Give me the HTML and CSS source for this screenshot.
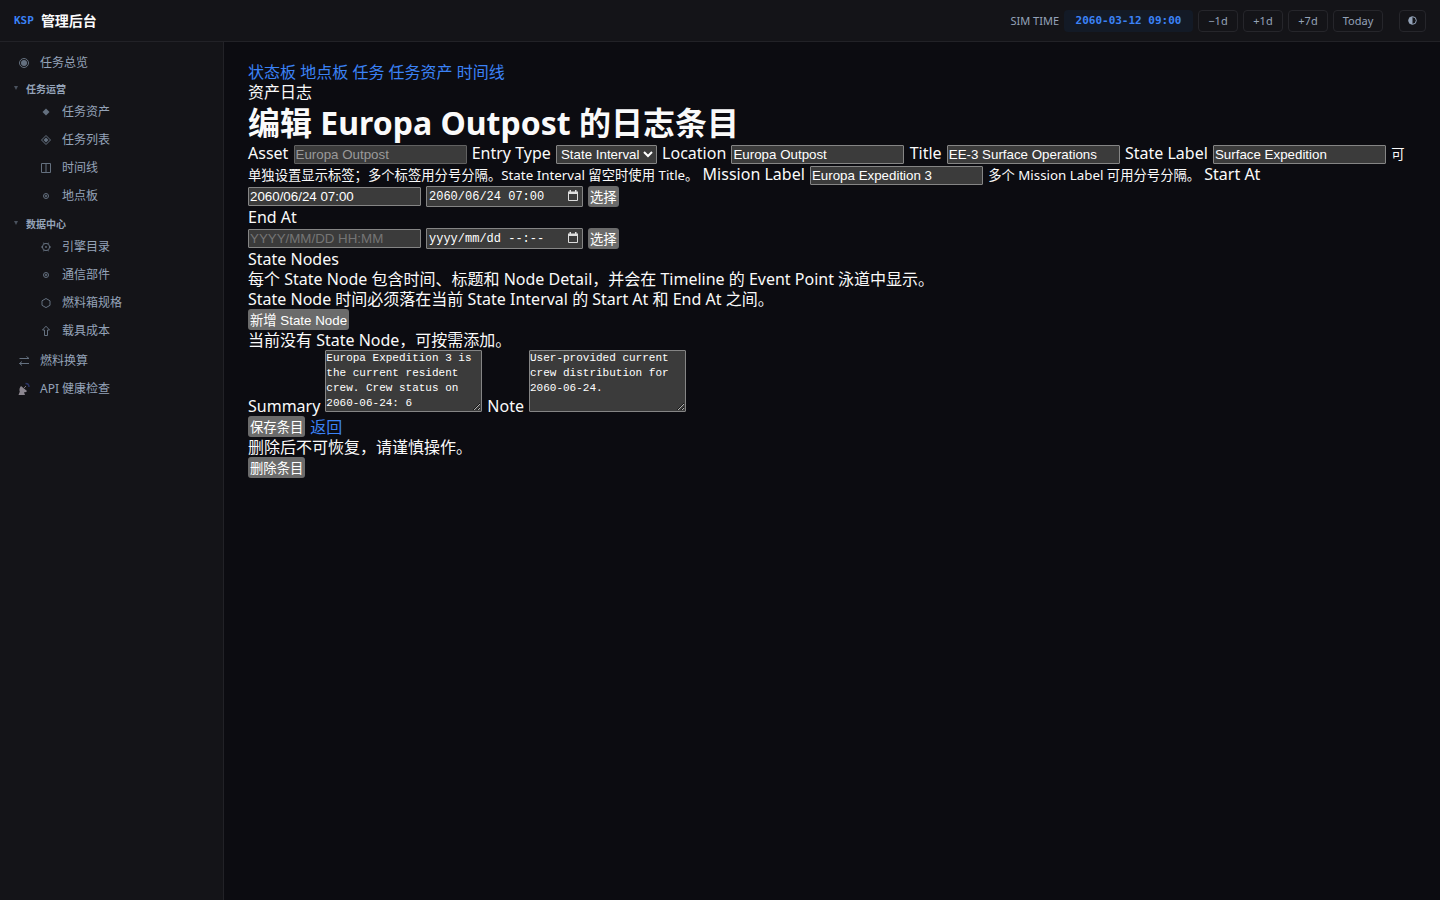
FILE: index.html
```html
<!DOCTYPE html>
<html lang="zh-CN">
<head>
<meta charset="utf-8">
<title>KSP 管理后台</title>
<link rel="stylesheet" href="styles.css">
</head>
<body>
<header class="topbar">
  <div class="brand"><span class="brand-mark">KSP</span> <span>管理后台</span></div>
  <div class="sim">
    <span class="sim-label">SIM TIME</span>
    <span class="sim-time">2060-03-12 09:00</span>
    <button class="chip" type="button">−1d</button>
    <button class="chip" type="button">+1d</button>
    <button class="chip" type="button">+7d</button>
    <button class="chip chip-wide" type="button">Today</button>
    <button class="chip chip-theme" type="button" aria-label="Theme"><svg width="9" height="9" viewBox="0 0 9 9"><circle cx="4.500" cy="4.500" r="3.800" fill="none" stroke="currentColor"/><path d="M4.500 .7a3.800 3.800 0 0 0 0 7.600z" fill="currentColor"/></svg></button>
  </div>
</header>
<div class="shell">
  <nav class="sidebar">
    <a class="item" href="#"><svg class="ico" viewBox="0 0 14 14"><circle cx="7" cy="7" r="4.500"/><circle class="fill" cx="7" cy="7" r="3"/></svg>任务总览</a>
    <button class="group" type="button"><svg class="caret" viewBox="0 0 6 6"><path d="M1 1h4L3 5z"/></svg>任务运营</button>
    <div class="sub">
      <a class="item" href="#"><svg class="ico" viewBox="0 0 14 14"><path class="fill" d="M7 3.500l3.500 3.500L7 10.500 3.500 7z"/></svg>任务资产</a>
      <a class="item" href="#"><svg class="ico" viewBox="0 0 14 14"><path d="M7 2.500L11.500 7 7 11.500 2.500 7z"/><path class="fill" d="M7 4.500L9.500 7 7 9.500 4.500 7z"/></svg>任务列表</a>
      <a class="item" href="#"><svg class="ico" viewBox="0 0 14 14"><path d="M2.500 2.500h9v9h-9zM7 2.500v9"/></svg>时间线</a>
      <a class="item" href="#"><svg class="ico" viewBox="0 0 14 14"><circle cx="7" cy="7" r="2.500"/><circle cx="7" cy="7" r=".8"/></svg>地点板</a>
    </div>
    <button class="group" type="button"><svg class="caret" viewBox="0 0 6 6"><path d="M1 1h4L3 5z"/></svg>数据中心</button>
    <div class="sub">
      <a class="item" href="#"><svg class="ico" viewBox="0 0 14 14"><circle cx="7" cy="7" r="3.600"/><circle class="fill" cx="7" cy="7" r=".9"/><path d="M2 7h1.500M10.500 7H12M4.500 2.700l.8 1.300M9.500 2.700l-.8 1.300M4.500 11.300l.8-1.300M9.500 11.300l-.8-1.300"/></svg>引擎目录</a>
      <a class="item" href="#"><svg class="ico" viewBox="0 0 14 14"><circle cx="7" cy="7" r="2.500"/><circle cx="7" cy="7" r=".8"/></svg>通信部件</a>
      <a class="item" href="#"><svg class="ico" viewBox="0 0 14 14"><path d="M7 2.500l4 2.300v4.500l-4 2.300-4-2.300V4.800z"/></svg>燃料箱规格</a>
      <a class="item" href="#"><svg class="ico" viewBox="0 0 14 14"><path d="M7 2.200L10.500 6h-2v5.500h-3V6h-2z"/></svg>载具成本</a>
    </div>
    <a class="item" href="#"><svg class="ico" viewBox="0 0 14 14"><path d="M2.500 4.500h9.500M9.500 2.500l2.500 2M12 9.500H2.500M5 7.500l-2.500 2 2.500 2"/></svg>燃料换算</a>
    <a class="item" href="#"><svg class="ico" viewBox="0 0 14 14"><path fill="#8c8790" stroke="none" d="M4 4l6 5c-1 1.300-2 1.500-3 1.300L8 13H1.500l1.300-3.200C2 8 2.600 5.500 4 4z"/><path stroke="#77727c" d="M6.500 6.500L9 4"/><path stroke="#2b3566" stroke-width="1.500" d="M8.500 1.500C10.500 1.500 12 3 12 5"/></svg>API 健康检查</a>
  </nav>
  <main class="main">
    <div><a href="#">状态板</a> <a href="#">地点板</a> <a href="#">任务</a> <a href="#">任务资产</a> <a href="#">时间线</a></div>
    <div>资产日志</div>
    <h1>编辑 Europa Outpost 的日志条目</h1>
    <form>
      <div class="fields">
        <label>Asset <input type="text" value="Europa Outpost" disabled></label>
        <label>Entry Type <select><option>State Interval</option></select></label>
        <label>Location <input type="text" value="Europa Outpost"></label>
        <label>Title <input type="text" value="EE-3 Surface Operations"></label>
        <label>State Label <input type="text" value="Surface Expedition"> <small>可单独设置显示标签；多个标签用分号分隔。State Interval 留空时使用 Title。</small></label>
        <label>Mission Label <input type="text" value="Europa Expedition 3"> <small>多个 Mission Label 可用分号分隔。</small></label>
        <label for="start">Start At</label>
      </div>
      <div class="when">
        <input id="start" type="text" value="2060/06/24 07:00">
        <span class="picker"><input type="text" aria-label="Start date and time" value="2060/06/24 07:00"><svg viewBox="0 0 12 12"><path d="M1.500 2.500h9v8h-9z"/><path class="fill" d="M1 1.500h10V4H1zM2.500 0H4v2H2.500zM8 0h1.500v2H8z"/></svg></span>
        <button type="button">选择</button>
      </div>
      <div class="end-label"><label for="end">End At</label></div>
      <div class="when">
        <input id="end" type="text" placeholder="YYYY/MM/DD HH:MM">
        <span class="picker"><input type="text" aria-label="End date and time" value="yyyy/mm/dd --:--"><svg viewBox="0 0 12 12"><path d="M1.500 2.500h9v8h-9z"/><path class="fill" d="M1 1.500h10V4H1zM2.500 0H4v2H2.500zM8 0h1.500v2H8z"/></svg></span>
        <button type="button">选择</button>
      </div>
      <div>State Nodes</div>
      <div>每个 State Node 包含时间、标题和 Node Detail，并会在 Timeline 的 Event Point 泳道中显示。</div>
      <div>State Node 时间必须落在当前 State Interval 的 Start At 和 End At 之间。</div>
      <div class="when"><button type="button">新增 State Node</button></div>
      <div>当前没有 State Node，可按需添加。</div>
      <div class="notes">
        <label for="summary">Summary</label>
        <textarea id="summary">Europa Expedition 3 is the current resident crew. Crew status on 2060-06-24: 6</textarea>
        <label for="note">Note</label>
        <textarea id="note">User-provided current crew distribution for 2060-06-24.</textarea>
      </div>
      <div class="when"><button type="submit">保存条目</button> <a href="#">返回</a></div>
    </form>
    <div>删除后不可恢复，请谨慎操作。</div>
    <div class="when"><button type="button">删除条目</button></div>
  </main>
</div>
</body>
</html>
```
FILE: styles.css
```css
* { box-sizing: border-box; margin: 0; padding: 0; }
body {
  min-height: 100vh;
  display: flex;
  flex-direction: column;
  background: #0c0c11;
  color: #fafafa;
  font: 16px/20px "Noto Sans", "Noto Sans CJK SC", sans-serif;
}
a { color: #3b82f6; text-decoration: none; }
.topbar {
  height: 42px;
  padding: 0 14px;
  display: flex;
  align-items: center;
  justify-content: space-between;
  background: #141418;
  border-bottom: 1px solid #222227;
}
.brand { display: flex; align-items: center; gap: 7px; font-size: 14px; font-weight: 700; }
.brand-mark { color: #3b82f6; font: 700 11px "DejaVu Sans Mono", monospace; }
.sim { display: flex; align-items: center; gap: 5px; }
.sim-label { color: #94a3b8; font-size: 11px; }
.sim-time {
  width: 129px;
  height: 22px;
  border-radius: 4px;
  background: #131a26;
  color: #3b82f6;
  font: 700 11px/22px "DejaVu Sans Mono", monospace;
  text-align: center;
}
.chip {
  min-width: 40px;
  height: 22px;
  border: 1px solid #26262b;
  border-radius: 4px;
  background: #141418;
  color: #94a3b8;
  font: 11px "Noto Sans", sans-serif;
}
.chip-wide { min-width: 50px; }
.chip-theme {
  min-width: 27px;
  margin-left: 11px;
  display: flex;
  align-items: center;
  justify-content: center;
}
.shell { flex: 1; display: flex; }
.sidebar {
  width: 224px;
  flex: none;
  padding: 7px 0;
  background: #141418;
  border-right: 1px solid #222227;
}
.item {
  height: 28px;
  padding-left: 17px;
  display: flex;
  align-items: center;
  gap: 9px;
  color: #94a3b8;
  font-size: 12px;
}
.ico { width: 14px; height: 14px; fill: none; stroke: #64707f; }
.fill { fill: #64707f; stroke: none; }
.group {
  height: 20px;
  padding: 0 13px;
  margin-top: 1px;
  display: flex;
  align-items: center;
  gap: 7px;
  border: 0;
  background: none;
  color: #94a3b8;
  font: 700 10px "Noto Sans", "Noto Sans CJK SC", sans-serif;
}
.caret { width: 6px; height: 6px; fill: #4a525e; }
.sub { padding: 0 0 2px 22px; }
.main { flex: 1; min-width: 0; padding: 20px 24px; }
h1 { font-size: 32px; line-height: 41px; font-weight: 700; }
.fields { padding-bottom: 1px; }
.fields input, .fields select { margin: 0 1px; }
.end-label { line-height: 21px; }
small { font-size: smaller; }
input, select, textarea {
  border: 1px solid #858585;
  border-radius: 1px;
  background: #3b3b3b;
  color: #fff;
}
input, select, button { font-family: "Liberation Sans", "Noto Sans CJK SC", sans-serif; }
input, select { height: 19px; }
input { width: 173px; padding: 0 1px; }
input:disabled { color: #9a9a9a; border-color: #616161; }
input::placeholder { color: #757575; }
select { width: 101px; }
.when { min-height: 21px; display: flex; align-items: center; gap: 5px; }
.when button {
  height: 21px;
  padding: 0 2px;
  border: 0;
  border-radius: 3px;
  background: #6b6b6b;
  color: #fff;
}
.picker { display: flex; position: relative; }
.picker input { width: 157px; height: 21px; padding: 0 2px; font: 12px "Liberation Mono", monospace; }
.picker svg { position: absolute; right: 4px; top: 4px; width: 12px; height: 12px; fill: none; stroke: #ddd; }
.picker .fill { fill: #ddd; }
.notes { display: flex; align-items: flex-end; gap: 5px; }
textarea {
  width: 157px;
  height: 62px;
  margin-bottom: 4px;
  overflow: hidden;
  resize: both;
  font: 11px/15px "Liberation Mono", monospace;
}
```
